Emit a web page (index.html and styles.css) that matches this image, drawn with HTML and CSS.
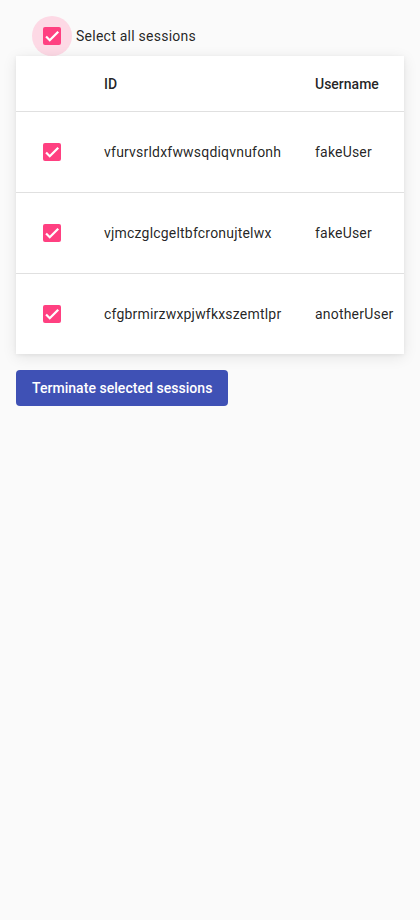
FILE: index.html
```html
<!DOCTYPE html>
<html>
<head>
<meta charset="utf-8">
<link rel="stylesheet" href="styles.css">
</head>
<body>
<div class="page">
  <label class="select-all">
    <span class="ripple">
      <span class="box"><svg viewBox="0 0 24 24" width="18" height="18"><path d="M4.1 12.7 9 17.6 20.3 6.3" fill="none" stroke="#fff" stroke-width="3"/></svg></span>
    </span>
    <span class="label-text">Select all sessions</span>
  </label>
  <div class="card">
    <div class="row head">
      <div class="cell"></div>
      <div class="cell">ID</div>
      <div class="cell">Username</div>
    </div>
    <div class="row">
      <div class="cell cb"><span class="box"><svg viewBox="0 0 24 24" width="18" height="18"><path d="M4.1 12.7 9 17.6 20.3 6.3" fill="none" stroke="#fff" stroke-width="3"/></svg></span></div>
      <div class="cell">vfurvsrldxfwwsqdiqvnufonh</div>
      <div class="cell">fakeUser</div>
    </div>
    <div class="row">
      <div class="cell cb"><span class="box"><svg viewBox="0 0 24 24" width="18" height="18"><path d="M4.1 12.7 9 17.6 20.3 6.3" fill="none" stroke="#fff" stroke-width="3"/></svg></span></div>
      <div class="cell">vjmczglcgeltbfcronujtelwx</div>
      <div class="cell">fakeUser</div>
    </div>
    <div class="row last">
      <div class="cell cb"><span class="box"><svg viewBox="0 0 24 24" width="18" height="18"><path d="M4.1 12.7 9 17.6 20.3 6.3" fill="none" stroke="#fff" stroke-width="3"/></svg></span></div>
      <div class="cell">cfgbrmirzwxpjwfkxszemtlpr</div>
      <div class="cell">anotherUser</div>
    </div>
  </div>
  <button class="btn">Terminate selected sessions</button>
</div>
</body>
</html>
```
FILE: styles.css
```css
html, body {
  margin: 0;
  padding: 0;
  background: #fafafa;
  font-family: Roboto, "Liberation Sans", sans-serif;
  color: rgba(0,0,0,0.87);
  font-size: 14px;
}
.page {
  padding: 16px 16px;
  display: flex;
  flex-direction: column;
  align-items: flex-start;
}
.select-all {
  display: flex;
  align-items: center;
  height: 40px;
  margin-left: 16px;
}
.ripple {
  width: 40px;
  height: 40px;
  border-radius: 50%;
  background: #fdd9e5;
  display: flex;
  align-items: center;
  justify-content: center;
}
.box {
  width: 18px;
  height: 18px;
  border-radius: 2px;
  background: #ff4081;
  display: flex;
  align-items: center;
  justify-content: center;
}
.box svg { display: block; }
.label-text {
  margin-left: 4px;
  line-height: 20px;
  letter-spacing: 0.25px;
}
.card {
  width: 388px;
  background: #fff;
  box-shadow: 0 3px 14px rgba(0,0,0,.09), 0 1px 4px rgba(0,0,0,.06);
}
.row {
  display: grid;
  grid-template-columns: 88px 211px 1fr;
  height: 80px;
  align-items: center;
  border-bottom: 1px solid #e0e0e0;
  letter-spacing: 0.2px;
}
.row.head {
  height: 55px;
  font-weight: 500;
  letter-spacing: 0;
}
.row.last {
  border-bottom: none;
  height: 80px;
}
.cell.cb {
  padding-left: 27px;
}
.btn {
  margin-top: 16px;
  height: 36px;
  padding: 0 16px;
  background: #3f51b5;
  color: #fff;
  border: none;
  border-radius: 4px;
  font-family: Roboto, "Liberation Sans", sans-serif;
  font-size: 14px;
  font-weight: 500;
  letter-spacing: 0.04px;
}
```
